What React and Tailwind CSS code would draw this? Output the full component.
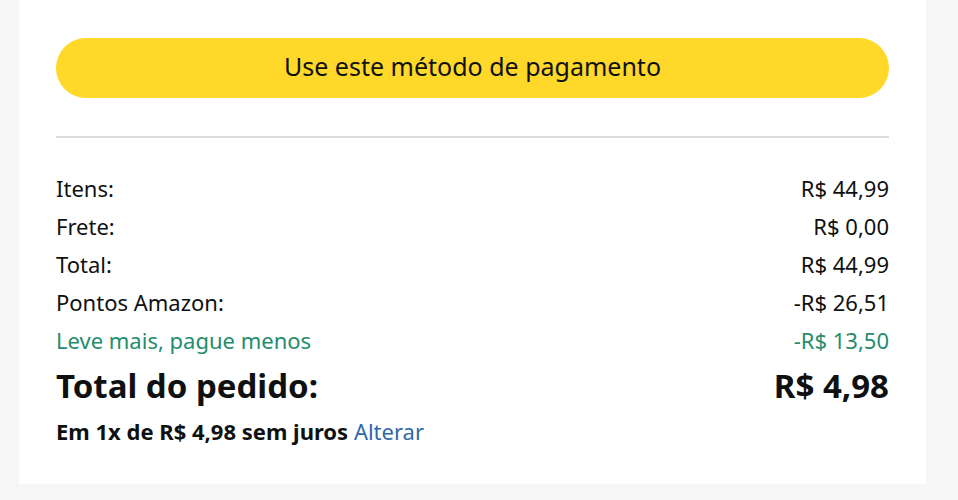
import React from 'react';

const rows = [
  { label: 'Itens:', value: 'R$ 44,99' },
  { label: 'Frete:', value: 'R$ 0,00' },
  { label: 'Total:', value: 'R$ 44,99' },
  { label: 'Pontos Amazon:', value: '-R$ 26,51' },
  { label: 'Leve mais, pague menos', value: '-R$ 13,50', green: true },
];

function App() {
  return (
    <div className="h-[500px] bg-[#f6f6f6] pl-[19px] overflow-hidden text-[#0f1111]" style={{ fontFamily: '"Noto Sans", "Open Sans", sans-serif' }}>
      <div className="w-[907px] h-[484px] bg-white px-[37px] pt-[38px]">
        <button
          type="button"
          className="w-full h-[60px] rounded-full bg-[#ffd82a] text-[25px] leading-none pb-[4px] text-[#0f1111] flex items-center justify-center"
        >
          Use este método de pagamento
        </button>

        <div className="mt-[38px] h-[2px] bg-[#dddddd]" />

        <div className="mt-[31px] text-[22px]">
          {rows.map((row) => (
            <div key={row.label} className={`flex justify-between leading-[38px] ${row.green ? 'text-[#258d6c]' : ''}`}>
              <span>{row.label}</span>
              <span>{row.value}</span>
            </div>
          ))}
        </div>

        <div className="mt-[7px] flex justify-between text-[33px] font-bold leading-[40px]">
          <span>Total do pedido:</span>
          <span>R$ 4,98</span>
        </div>

        <div className="mt-[12px] text-[22px] leading-[26px]">
          <span className="font-bold">Em 1x de R$ 4,98 sem juros</span>{' '}
          <a href="#" className="text-[#2f6aa8]">Alterar</a>
        </div>
      </div>
    </div>
  );
}

export default App;
